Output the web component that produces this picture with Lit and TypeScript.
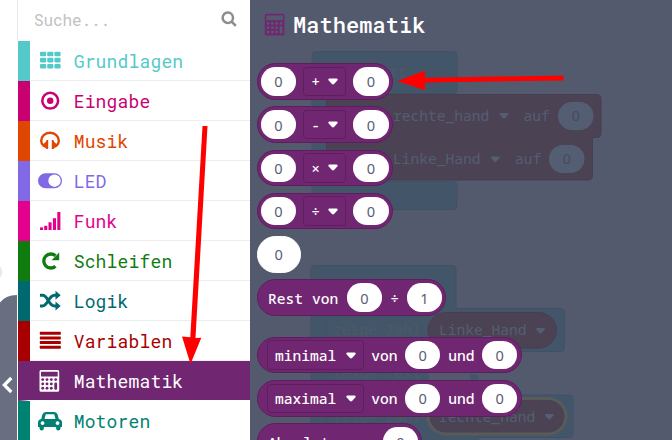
import { LitElement, html, svg, css } from "lit";
import { customElement, property } from "lit/decorators.js";

const calculator = svg`
  <path fill-rule="evenodd" d="M3 9h16.700q1.500 0 1.500 1.500v18.700q0 1.500-1.500 1.500H3q-1.500 0-1.500-1.500V10.500q0-1.500 1.500-1.500zM3 10.700v4.800h16.700v-4.800z"/>
  <g class="holes">
    ${[18.6, 22.9, 27.2].map((y) => [4.7, 9, 13.3].map((x) => svg`<circle cx=${x} cy=${y} r="1.450"/>`))}
    <circle cx="17.700" cy="18.600" r="1.450"/>
    <rect x="16.300" y="21.500" width="2.800" height="7.200" rx="1.300"/>
  </g>`;

const icons: Record<string, unknown> = {
  grid: svg`${[10.7, 16.8, 22.9].map((y) => [2, 9.2, 16.4].map((x) =>
    svg`<rect x=${x} y=${y} width="6.200" height="4.600" rx="1.100"/>`))}`,
  target: svg`<circle cx="12.200" cy="19.700" r="7.900" fill="none" stroke="currentColor" stroke-width="2.500"/><circle cx="12.200" cy="19.700" r="3.200"/>`,
  headphones: svg`<path fill="none" stroke="currentColor" stroke-width="2.400" d="M5.300 24.500Q3.200 22.500 3.200 19.800C3.200 15.300 7 11.800 12 11.800S20.800 15.300 20.800 19.800Q20.800 22.500 18.700 24.500"/><path d="M10.200 19v9H8.300q-.2-1.300-1.800-1.600q-2.200-.6-2.700-3q4-.9 4.800-4.400zM13.800 19v9h1.900q.2-1.300 1.800-1.600q2.200-.6 2.700-3q-4-.9-4.800-4.400z"/>`,
  toggle: svg`<path fill-rule="evenodd" d="M7.500 12.200h9a7.500 7.500 0 0 1 0 15h-9a7.500 7.500 0 0 1 0-15zM16.500 13.500a6.200 6.200 0 1 0 0 12.400a6.200 6.200 0 1 0 0-12.400z"/>`,
  signal: svg`${[[2, 2.6], [6.2, 4.2], [10.5, 7.7], [14.9, 11.8], [19.3, 18]].map(([x, h]) =>
    svg`<rect x=${x} y=${29 - h} width="3.100" height=${h}/>`)}`,
  loop: svg`<path fill="none" stroke="currentColor" stroke-width="3.300" d="M17.500 25.200A7 7 0 1 1 17.500 14.800"/><path d="M21.200 11.600v7.600h-7.600z"/>`,
  shuffle: svg`<path fill="none" stroke="currentColor" stroke-width="2.900" d="M2 14.300h2.500c5.500 0 6 10.700 12 10.700h1.500M2 25h2.500c5.500 0 6-10.700 12-10.700h1.500"/><path d="M17.500 9.800l5.200 4.500l-5.200 4.500zM17.500 20.500l5.200 4.500l-5.200 4.500z"/>`,
  lines: svg`${[10.8, 15.4, 20, 24.7].map((y) => svg`<rect x="1.800" y=${y} width="21" height="3" rx=".6"/>`)}`,
  calculator,
  car: svg`<path fill-rule="evenodd" d="M7.800 10.900h8.400q2.600 0 3.400 2.600l1.200 4.500q3.200.5 3.200 3.500v4.500h-1.500v1.200a2.200 2.200 0 0 1-4.400 0v-1.200H5.900v1.200a2.200 2.200 0 0 1-4.400 0v-1.200H0v-4.500q0-3 3.200-3.500l1.200-4.500q.8-2.600 3.400-2.600zM7.800 13.200l-1.300 4.800h11l-1.300-4.800zM4.500 20.200a1.900 1.900 0 1 0 .1 0zM19.500 20.200a1.900 1.900 0 1 0 .1 0z"/>`,
};

const categories = [
  ["Grundlagen", "#54c9c9", "grid"],
  ["Eingabe", "#c90072", "target"],
  ["Musik", "#df4600", "headphones"],
  ["LED", "#8169e6", "toggle"],
  ["Funk", "#e3008c", "signal"],
  ["Schleifen", "#107c10", "loop"],
  ["Logik", "#006970", "shuffle"],
  ["Variablen", "#a80000", "lines"],
  ["Mathematik", "#712672", "calculator"],
  ["Motoren", "#008272", "car"],
];

@customElement("category-row")
class CategoryRow extends LitElement {
  @property() name = "";
  @property() color = "";
  @property() icon = "";
  @property({ type: Boolean }) active = false;
  static styles = css`
    :host { display: block; height: 40px; flex: none; }
    .row { display: flex; height: 40px; box-sizing: border-box; border-left: 12px solid; border-bottom: 1px solid transparent; background-clip: padding-box; align-items: flex-start; }
    .icon { width: 24px; height: 39px; margin-left: 8px; fill: currentColor; flex: none; }
    .holes { fill: #fff; }
    .row.active .holes { fill: #712672; }
    .name { margin-left: 11.700px; font: 18px/40px "Roboto Mono", "DejaVu Sans Mono", monospace; letter-spacing: .16px; }
    .line { border-bottom: 0; box-shadow: inset 0 -1px #ecedef; }
  .row.active .name, .row.active .icon { color: #fff; }
  `;
  render() {
    const fill = this.active ? `;background-color:${this.color}` : "";
    return html`<div class="row ${this.active ? "active" : "line"}" style="color:${this.color}${fill}">
      <svg class="icon" viewBox="0 0 24 39">${icons[this.icon]}</svg>
      <span class="name">${this.name}</span>
    </div>`;
  }
}

type Part = { t: "num" | "text" | "menu"; v: string; w: number };
const num = (v = "0"): Part => ({ t: "num", v, w: 35.5 });
const text = (v: string, w: number): Part => ({ t: "text", v, w });
const menu = (v: string, w: number): Part => ({ t: "menu", v, w });

const blocks: { parts: Part[]; kind: string }[] = [
  ...["+", "-", "×", "÷"].map((op) => ({ kind: "infix", parts: [num(), menu(op, 42.5), num()] })),
  { kind: "lone", parts: [num()] },
  { kind: "words rest", parts: [text("Rest von", 70.7), num(), text("÷", 8.5), num("1")] },
  ...["minimal", "maximal"].map((op) => ({
    kind: "words pick", parts: [menu(op, 96.5), text("von", 26), num(), text("und", 26), num()],
  })),
  { kind: "words", parts: [text("Absolute von", 106.5), num()] },
];

@customElement("app-root")
class AppRoot extends LitElement {
  static styles = css`
    :host { display: flex; position: relative; width: 672px; height: 440px; overflow: hidden; background: #fff; }
    .edge { width: 17px; flex: none; }
    .toolbox { width: 233px; flex: none; display: flex; flex-direction: column; background: #fff; }
    .search { height: 41px; flex: none; display: flex; align-items: center; justify-content: space-between; padding: 0 13px 3px 16px; box-sizing: border-box; border-left: 1px solid #e8e9ec; font: 16px "Roboto Mono", "DejaVu Sans Mono", monospace; color: #c1c1c1; letter-spacing: -.1px; }
    .search svg { width: 16px; height: 16px; fill: none; stroke: #8d8d8d; stroke-width: 2.500; }
    .rows { padding-left: 1px; }
    .flyout { position: relative; flex: 1; background: #545a6d; overflow: hidden; }
    .canvas, .arrows { position: absolute; left: 0; top: 0; }
    .canvas { font: 14.600px "Noto Sans Mono", "DejaVu Sans Mono", monospace; }
    .content { position: relative; display: flex; flex-direction: column; align-items: flex-start; padding-left: 6.600px; }
    .title { height: 50px; margin-bottom: 13px; display: flex; align-items: center; gap: 7.500px; padding-left: 5px; color: #fff; font: 500 22px "Roboto Mono", "DejaVu Sans Mono", monospace; letter-spacing: .05px; }
    .title span { padding-bottom: 1px; }
    .title svg { width: 24px; height: 40px; fill: #712672; }
    .title .holes { fill: #545a6d; }
    .block { box-sizing: border-box; height: 36.500px; margin-bottom: 6.750px; border: 1px solid #5c1f5d; border-radius: 18.300px; background: #712672; display: flex; align-items: center; gap: 7.200px; padding: 0 3.200px; color: #fff; font: 500 14.600px "Noto Sans Mono", "DejaVu Sans Mono", monospace; white-space: pre; }
    .words { padding-left: 10.500px; gap: 8px; }
    .pick { padding-left: 9.500px; gap: 7.700px; }
    .rest { margin-bottom: 21.200px; }
    .lone { background: #fff; border-color: #fff; padding: 0 3.400px; }
    .num { box-sizing: border-box; height: 28.500px; border-radius: 14.300px; background: #fff; color: #575e75; display: grid; place-items: center; flex: none; font-family: "Noto Sans", sans-serif; font-weight: 400; }
    .menu { box-sizing: border-box; height: 29.500px; border: 1px solid #5c1f5d; border-radius: 3.500px; display: flex; align-items: center; justify-content: space-between; padding: 0 7px 0 6.800px; flex: none; }
    .menu svg { width: 10px; height: 7px; fill: #fff; }
    .text { flex: none; }
    .digit { font-family: "Noto Sans", sans-serif; }
  `;

  part(p: Part) {
    return html`<span class=${p.t} style="width:${p.w}px">${p.v}${p.t === "menu"
      ? html`<svg viewBox="0 0 10 7"><path d="M1.200.5h7.600q1.500.6.5 1.900l-3 3.400q-1.300 1.200-2.600 0l-3-3.400q-1-1.300.5-1.900z"/></svg>` : ""}</span>`;
  }

  workspace() {
    const chevron = (x: number, y: number) => svg`<path d="M${x} ${y}h7.600q1.200.6.400 1.600l-3.100 3.400q-1.100 1-2.200 0l-3.100-3.400q-.8-1 .4-1.600z"/>`;
    return html`<svg class="canvas" width="422" height="440" viewBox="250 0 422 440">
      <g fill="#435669" stroke="#405166">
        <path d="M316 51.500h137q4 0 4 4v34q0 4-4 4H326.500v88H453q4 0 4 4v20q0 4-4 4H316q-4 0-4-4V55.500q0-4 4-4z"/>
        <path d="M315 265.500h137q4 0 4 4V308.500H560.500q4 0 4 4v35q0 4-4 4H478v43.500h91q4 0 4 4v34.500q0 4-4 4H478V450H311V269.500q0-4 4-4z"/>
      </g>
      <path d="M446 352.500h33v42h-33q-17.500-2-17.500-21t17.500-21z" fill="#545a6d"/>
      <path d="M470 374.500h8.500v6h-8.500z" fill="#435669"/>
      <path d="M326.500 308.500v132M326.500 351.500h100M326.500 394.500h100" fill="none" stroke="#405166"/>
      <g fill="#4b4254" stroke="#483d51">
        <path d="M326.500 94.500H597q4 0 4 4v35q0 4-4 4H592.500v38.500q0 4-4 4H326.500z"/>
        <rect x="428" y="312.500" width="128.500" height="35.500" rx="17.800"/>
        <rect x="428" y="398.500" width="138" height="35.500" rx="17.800" stroke="#595b5a" stroke-width="3"/>
      </g>
      <g fill="#545e73">
        <rect x="558" y="102" width="35.500" height="28" rx="14"/>
        <rect x="549" y="145" width="35.500" height="28" rx="14"/>
        <text x="393" y="120.500">rechte_hand</text><text x="523.500" y="120.500">auf</text>
        <text x="393" y="163.500">Linke_Hand</text><text x="515" y="163.500">auf</text>
        <text x="439" y="335">Linke_Hand</text><text x="439" y="421.500">rechte_hand</text>
        ${chevron(500.200, 113)}${chevron(491.500, 156.500)}${chevron(536.700, 328)}${chevron(545.500, 414)}
      </g>
      <g fill="#4f5868">
        <text x="363" y="77">start</text><text x="333" y="335">zeige Zahl</text>
        <text x="333" y="378">zeige Text</text><text x="333" y="421.500">zeige Zahl</text>
      </g>
      <g fill="#444b5f" class="digit"><text x="571.500" y="121">0</text><text x="562.500" y="164">0</text></g>
    </svg>`;
  }

  render() {
    return html`
      <svg class="edge" width="17" height="440" viewBox="0 0 17 440">
        <circle cx="-5" cy="272" r="7.500" fill="#e9e9e9"/>
        <path d="M-4 440V316Q-3 295 18 295V440z" fill="#696f81"/>
        <path d="M11.300 378l-7 7l7 7" fill="none" stroke="#fff" stroke-width="3.200"/>
      </svg>
      <div class="toolbox">
        <div class="search"><span>Suche...</span>
          <svg viewBox="0 0 16 16"><circle cx="6.800" cy="6.800" r="5.200"/><path d="M10.500 10.500l4.300 4.300"/></svg></div>
        <div class="rows">${categories.map(([name, color, icon]) => html`
          <category-row .name=${name} .color=${color} .icon=${icon} ?active=${name === "Mathematik"}></category-row>`)}</div>
      </div>
      <div class="flyout">
        ${this.workspace()}
        <div class="content">
          <div class="title"><svg viewBox="0 0 24 40"><g transform="translate(1.300 -.2)">${calculator}</g></svg><span>Mathematik</span></div>
          ${blocks.map((b) => html`<div class="block ${b.kind}">${b.parts.map((p) => this.part(p))}</div>`)}
        </div>
      </div>
      <svg class="arrows" width="672" height="440" viewBox="0 0 672 440" fill="#f00">
        <path d="M202.500 126h5L195.500 338l5.800-.2L190.500 364L182 336.500l8.300.8z"/>
        <path d="M397.500 81L425 70.500v7.200L563.500 75.500v5L425 82.500v7.800z"/>
      </svg>`;
  }
}
